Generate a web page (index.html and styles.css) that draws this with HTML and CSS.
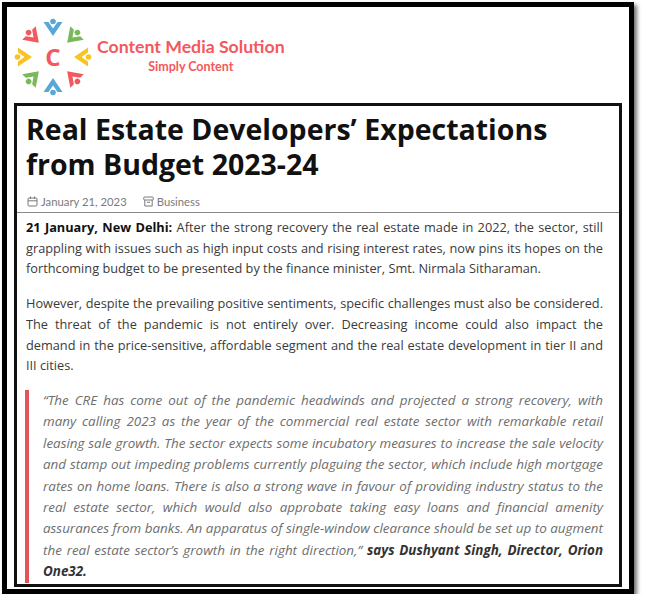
FILE: index.html
```html
<!DOCTYPE html>
<html lang="en">
<head>
<meta charset="utf-8">
<title>Real Estate Developers’ Expectations from Budget 2023-24</title>
<link rel="stylesheet" href="styles.css">
</head>
<body>
<div class="frame">
  <header class="brand">
    <svg class="logo-mark" viewBox="0 0 80 80" width="80" height="80" aria-hidden="true">
      <defs>
        <g id="person">
          <path d="M-9.5,-7 L-4.5,-7 L0,-0.5 L4.5,-7 L9.5,-7 L0,7 Z"/>
          <circle cx="0" cy="-7.5" r="2.8"/>
        </g>
      </defs>
      <g transform="translate(40,40)">
        <use href="#person" fill="#58a7d8" transform="rotate(0) translate(0,-28)"/>
        <use href="#person" fill="#7ab85a" transform="rotate(45) translate(0,-27)"/>
        <use href="#person" fill="#f7c325" transform="rotate(90) translate(0,-28)"/>
        <use href="#person" fill="#f4575c" transform="rotate(135) translate(0,-27)"/>
        <use href="#person" fill="#58a7d8" transform="rotate(180) translate(0,-28)"/>
        <use href="#person" fill="#7ab85a" transform="rotate(225) translate(0,-27)"/>
        <use href="#person" fill="#f7c325" transform="rotate(270) translate(0,-28)"/>
        <use href="#person" fill="#f4575c" transform="rotate(315) translate(0,-27)"/>
      </g>
      <text x="40" y="48.5" text-anchor="middle" class="logo-c">C</text>
    </svg>
    <div class="brand-text">
      <div class="brand-name">Content Media Solution</div>
      <div class="brand-tag">Simply Content</div>
    </div>
  </header>

  <article class="post">
    <div class="post-head">
      <h1 class="post-title">Real Estate Developers’ Expectations from Budget 2023-24</h1>
      <div class="meta">
        <span class="meta-item">
          <svg class="meta-icon" viewBox="0 0 11 11" width="11" height="11" aria-hidden="true">
            <rect x="1" y="2" width="9" height="8" rx="1"/>
            <path d="M1 4.8 H10 M3.5 0.5 V3 M7.5 0.5 V3"/>
          </svg>
          January 21, 2023
        </span>
        <span class="meta-item">
          <svg class="meta-icon" viewBox="0 0 11 11" width="11" height="11" aria-hidden="true">
            <rect x="0.8" y="1" width="9.4" height="3" rx="0.5"/>
            <path d="M1.8 4 V10 H9.2 V4 M4 6.3 H7"/>
          </svg>
          Business
        </span>
      </div>
    </div>

    <div class="post-body">
      <p><strong>21 January, New Delhi:</strong> After the strong recovery the real estate made in 2022, the sector, still grappling with issues such as high input costs and rising interest rates, now pins its hopes on the forthcoming budget to be presented by the finance minister, Smt. Nirmala Sitharaman.</p>
      <p>However, despite the prevailing positive sentiments, specific challenges must also be considered. The threat of the pandemic is not entirely over. Decreasing income could also impact the demand in the price-sensitive, affordable segment and the real estate development in tier II and III cities.</p>
      <blockquote class="quote">“The CRE has come out of the pandemic headwinds and projected a strong recovery, with many calling 2023 as the year of the commercial real estate sector with remarkable retail leasing sale growth. The sector expects some incubatory measures to increase the sale velocity and stamp out impeding problems currently plaguing the sector, which include high mortgage rates on home loans. There is also a strong wave in favour of providing industry status to the real estate sector, which would also approbate taking easy loans and financial amenity assurances from banks. An apparatus of single-window clearance should be set up to augment the real estate sector’s growth in the right direction,” <strong>says Dushyant Singh, Director, Orion One32.</strong></blockquote>
    </div>
  </article>
</div>
</body>
</html>
```

FILE: styles.css
```css
* { box-sizing: border-box; }

html, body {
  margin: 0;
  padding: 0;
  background: #ffffff;
}

.frame {
  margin: 2px 0 0 2px;
  width: 632px;
  height: 592px;
  border: 5px solid #000;
  background: #fff;
  box-shadow: 3px 3px 4px rgba(0, 0, 0, 0.55);
  overflow: hidden;
}

/* ---------- brand ---------- */
.brand {
  height: 96px;
  display: flex;
  align-items: flex-start;
  padding-left: 6px;
}

.logo-mark {
  display: block;
  margin-top: 10px;
  flex: none;
}

.logo-c {
  font-family: "Open Sans", sans-serif;
  font-weight: 700;
  font-size: 24px;
  fill: #f4575c;
}

.brand-text {
  margin-top: 29px;
  margin-left: 4px;
  display: flex;
  flex-direction: column;
  align-items: center;
  color: #f4575c;
  font-family: "Lato", sans-serif;
  font-weight: 700;
}

.brand-name {
  font-size: 17.7px;
  line-height: 21px;
}

.brand-tag {
  font-size: 12.5px;
  line-height: 19px;
}

/* ---------- post ---------- */
.post {
  margin: 0 7px;
  height: 484px;
  border: 3px solid #111;
  overflow: hidden;
}

.post-head {
  padding: 6px 16px 1px 9px;
  border-bottom: 1px solid #8a8a8a;
}

.post-title {
  margin: 0 0 9px;
  font-family: "Open Sans", sans-serif;
  font-weight: 700;
  font-size: 28.5px;
  line-height: 35px;
  color: #111;
}

.meta {
  display: flex;
  gap: 16px;
  height: 20px;
  align-items: center;
  font-family: "Lato", sans-serif;
  font-size: 11.3px;
  color: #7a7a7a;
  padding-left: 1px;
}

.meta-item {
  display: flex;
  align-items: center;
  gap: 3px;
}

.meta-icon {
  display: block;
  fill: none;
  stroke: #7a7a7a;
  stroke-width: 1;
}

.post-body {
  padding: 4px 16px 0 9px;
  font-family: "Open Sans", sans-serif;
  font-size: 12.76px;
  line-height: 20.7px;
  color: #3a3a3a;
  text-align: justify;
}

.post-body p {
  margin: 0 0 14px;
}

.post-body strong {
  color: #111;
  font-weight: 700;
}

.quote {
  margin: 7px 0 0 -1px;
  padding-left: 14px;
  border-left: 4px solid #e0545a;
  font-style: italic;
  font-size: 13.42px;
  line-height: 21.4px;
  color: #6e6e6e;
}

.quote strong {
  color: #333;
}
```
